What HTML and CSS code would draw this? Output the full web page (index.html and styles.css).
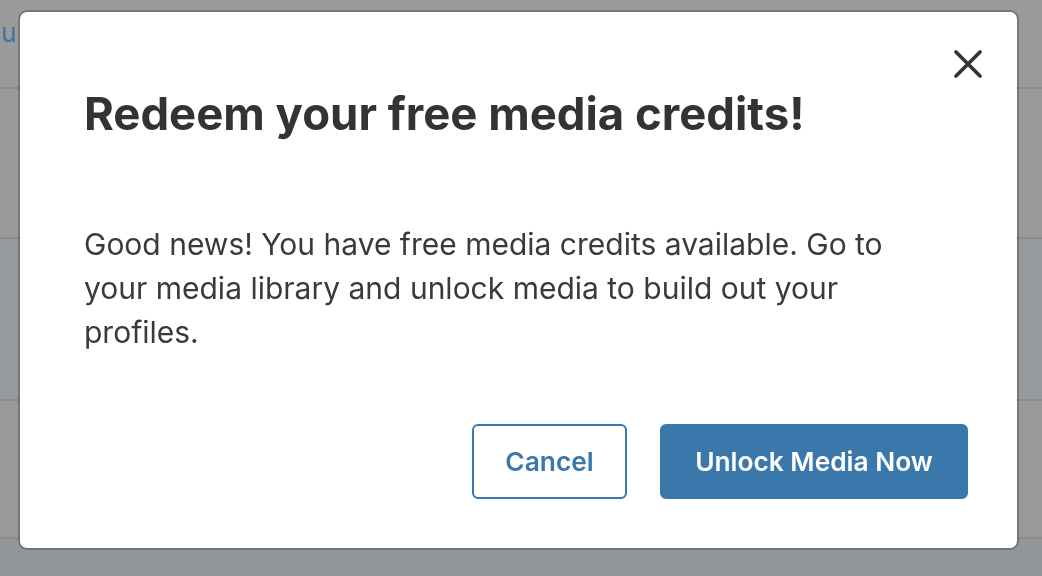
FILE: index.html
```html
<!DOCTYPE html>
<html lang="en">
<head>
<meta charset="utf-8">
<title>Redeem your free media credits</title>
<link rel="stylesheet" href="styles.css">
</head>
<body>
<div class="page">
  <div class="row row-top"><span class="link">u</span></div>
  <div class="row"></div>
  <div class="row row-alt"></div>
  <div class="row row-last"></div>
  <div class="row-rest"></div>
</div>

<div class="overlay">
  <div class="modal" role="dialog" aria-labelledby="modal-title">
    <button class="close" aria-label="Close">
      <svg viewBox="0 0 28 28" width="28" height="28" aria-hidden="true">
        <path d="M2 2 L26 26 M26 2 L2 26" stroke="#333" stroke-width="3.6" stroke-linecap="round" fill="none"/>
      </svg>
    </button>
    <h1 id="modal-title" class="title">Redeem your free media credits!</h1>
    <p class="text">Good news! You have free media credits available. Go to your media library and unlock media to build out your profiles.</p>
    <div class="actions">
      <button class="btn btn-outline">Cancel</button>
      <button class="btn btn-primary">Unlock Media Now</button>
    </div>
  </div>
</div>
</body>
</html>
```
FILE: styles.css
```css
* { box-sizing: border-box; }

html, body {
  margin: 0;
  padding: 0;
  height: 100%;
}

body {
  font-family: "Inter", "Liberation Sans", sans-serif;
  background: #939699;
  overflow: hidden;
}

.page {
  display: flex;
  flex-direction: column;
  height: 100%;
}

.row {
  border-bottom: 2px solid #8b8b8b;
  background: #9a9a9a;
  flex: none;
}

.row-top {
  height: 89px;
  padding: 15px 0 0 1px;
}

.row:nth-child(2) { height: 150px; }
.row-alt { height: 162px; background: #96999d; }
.row-last { height: 138px; background: #999999; }
.row-rest { flex: 1; background: #939699; }

.link {
  font-size: 26px;
  line-height: 36px;
  color: #3f74a3;
}

.overlay {
  position: fixed;
  inset: 0;
  display: flex;
  align-items: flex-start;
  justify-content: flex-start;
  padding: 12px 0 0 20px;
}

.modal {
  position: relative;
  width: 997px;
  height: 536px;
  background: #ffffff;
  border-radius: 7px;
  box-shadow: 0 0 0 2px rgba(0, 0, 0, 0.22);
  padding: 73px 49px 49px 64px;
  display: flex;
  flex-direction: column;
}

.close {
  position: absolute;
  top: 36px;
  right: 33px;
  width: 32px;
  height: 32px;
  padding: 2px;
  border: 0;
  background: transparent;
  display: flex;
  align-items: center;
  justify-content: center;
  cursor: pointer;
}

.title {
  margin: 0;
  font-size: 45.5px;
  line-height: 57px;
  font-weight: 700;
  color: #333333;
}

.text {
  margin: 80px 0 0 0;
  max-width: 830px;
  font-size: 30px;
  line-height: 44px;
  font-weight: 400;
  color: #3a3a3a;
}

.actions {
  margin-top: 70px;
  display: flex;
  justify-content: flex-end;
  gap: 33px;
}

.btn {
  height: 75px;
  padding: 0 33px;
  border: 2px solid #3a77aa;
  border-radius: 6px;
  font-family: "Inter", "Liberation Sans", sans-serif;
  font-size: 26.3px;
  font-weight: 600;
  display: flex;
  align-items: center;
  justify-content: center;
  cursor: pointer;
}

.btn-outline {
  background: #ffffff;
  color: #3a77aa;
  width: 155px;
}

.btn-primary {
  background: #3a77aa;
  color: #ffffff;
  width: 308px;
}
```
